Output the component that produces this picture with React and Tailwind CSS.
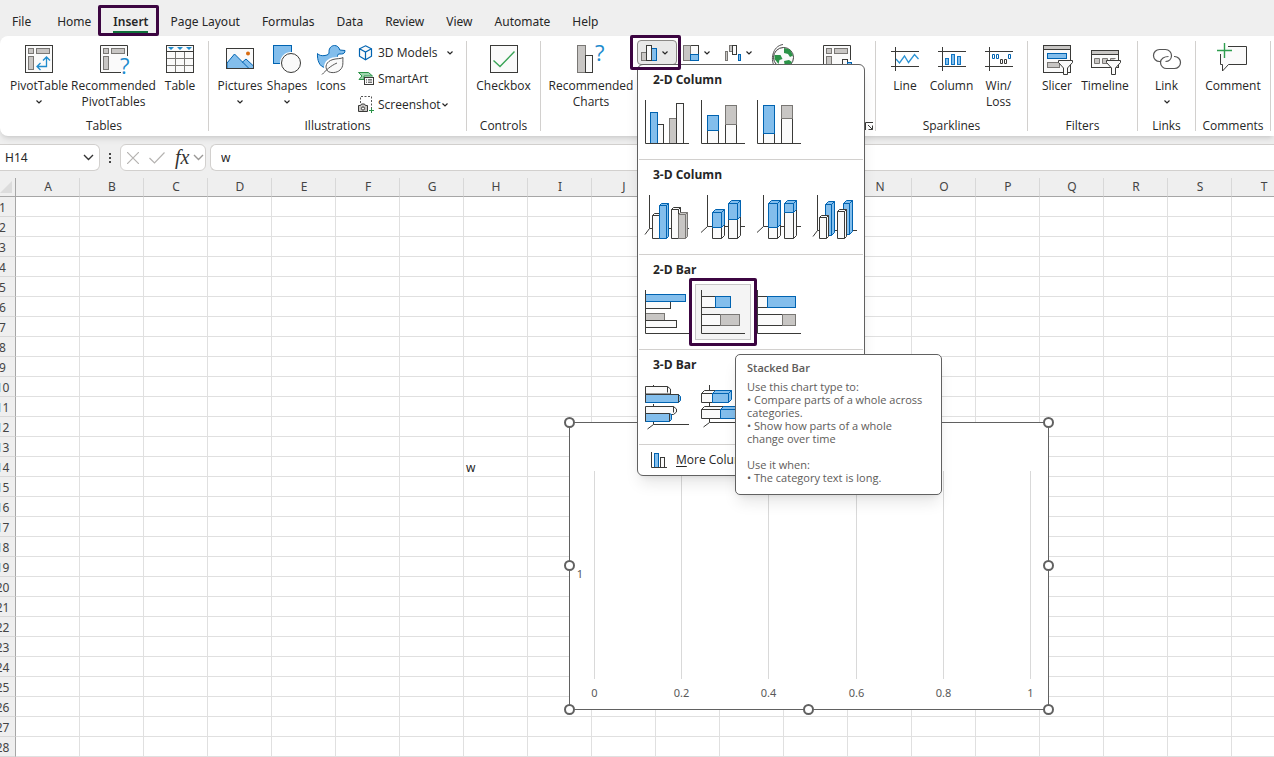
import clsx from "clsx";

const INK = "#3a3a38";
const PAPER = "#fafafa";
const BLUE = "#0063b1";
const SKY = "#83beec";
const GREY = "#797774";
const SILVER = "#c8c6c4";

const tones = {
  white: { fill: PAPER, stroke: INK },
  blue: { fill: SKY, stroke: BLUE },
  grey: { fill: SILVER, stroke: GREY },
};

/* ---------- Drawing helpers ---------- */

function Svg({ w = 28, h = 28, children }) {
  return (
    <svg
      width={w}
      height={h}
      viewBox={`0 0 ${w} ${h}`}
      fill="none"
      stroke={INK}
      className="shrink-0 overflow-visible"
      aria-hidden="true"
    >
      {children}
    </svg>
  );
}

function Bar({ x, y, w, h, tone = "white" }) {
  return <rect x={x} y={y} width={w} height={h} {...tones[tone]} />;
}

// A front face plus a top and a right face pushed back by d
function Block({ x, y, w, h, tone = "white", d = 3 }) {
  const r = x + w;
  return (
    <g {...tones[tone]} strokeLinejoin="round">
      <path d={`M${x} ${y}l${d} ${-d}h${w}l${-d} ${d}z`} />
      <path d={`M${r} ${y}l${d} ${-d}v${h}l${-d} ${d}z`} />
      <rect x={x} y={y} width={w} height={h} />
    </g>
  );
}

function Chevron() {
  return (
    <svg width="8" height="6" viewBox="0 0 8 6" fill="none" className="shrink-0" aria-hidden="true">
      <path d="M1.5 1.5L4 4l2.5-2.5" stroke="#262626" strokeWidth="1.2" />
    </svg>
  );
}

function WideChevron({ color }) {
  return (
    <svg width="11" height="7" viewBox="0 0 11 7" fill="none" className="shrink-0" aria-hidden="true">
      <path d="M1 1l4.500 4.500L10 1" stroke={color} strokeWidth="1.400" />
    </svg>
  );
}

/* ---------- Ribbon icons ---------- */

const PivotCells = () => (
  <>
    <Bar x={3.5} y={3.5} w={5} h={5} tone="grey" />
    <Bar x={11.5} y={3.5} w={13} h={5} tone="grey" />
    <Bar x={3.5} y={11.5} w={5} h={13} tone="grey" />
  </>
);

const QuestionMark = ({ x, y }) => (
  <text x={x} y={y} fontSize="22" fontFamily="Open Sans, sans-serif" fill="#1e8bcd" stroke="none">
    ?
  </text>
);

const PivotTableIcon = () => (
  <Svg>
    <rect x=".5" y=".5" width="27" height="27" fill={PAPER} />
    <PivotCells />
    <path d="M12.500 21.500h9V12M15.500 18l-3.500 3.500 3.500 3.500M18 15.500l3.500-3.500 3.500 3.500" stroke="#1e8bcd" strokeWidth="1.300" />
  </Svg>
);

const RecommendedPivotIcon = () => (
  <Svg>
    <path d="M27.500 11V.5H.5v27H21" fill={PAPER} />
    <PivotCells />
    <QuestionMark x={20} y={29} />
  </Svg>
);

const TableIcon = () => (
  <Svg>
    <rect x=".5" y=".5" width="27" height="27" fill={PAPER} />
    <path d="M9.500 7v20M18.500 7v20M1 13.500h26M1 20.500h26" stroke="#797774" />
    <path d="M.5 6.500h27" />
    <path d="M2 2h6L5 5zM11 2h6l-3 3zM20 2h6l-3 3z" fill="#1e8bcd" stroke="none" />
  </Svg>
);

const PicturesIcon = () => (
  <Svg>
    <rect x=".5" y="3.500" width="27" height="20" fill={PAPER} />
    <path d="M1 18l7.500-9L23 23.500H1zM16 17.500l4-3.500 7.500 7v2.500H22" fill={SKY} stroke={BLUE} />
    <rect x=".5" y="3.500" width="27" height="20" />
    <circle cx="22" cy="8.500" r="2" fill="#d86b10" stroke="none" />
  </Svg>
);

const ShapesIcon = () => (
  <Svg>
    <rect x=".5" y=".5" width="18" height="18" fill={SKY} stroke={BLUE} />
    <circle cx="18" cy="18" r="11" fill="#fff" stroke="none" />
    <circle cx="18" cy="18" r="9.500" fill={PAPER} />
  </Svg>
);

const DuckIcon = () => (
  <Svg>
    <path
      d="M.5 8.500C2 10.500 5 11 8 10.500c3-.5 4.500-1.500 4-4C12 3 14.500.5 17.500.5c2.500 0 4.500 1.500 5.300 4.500L28 5.500c0 2-1 3.500-3.500 3.500h-3c-1.500 1.500-1 3-.5 5.500L12 22.500H8C2.500 22 0 15 .5 8.500z"
      fill={SKY}
      stroke={BLUE}
    />
    <path
      d="M26 12.500c-2 1.500-6 .8-10 2-7 2-8.500 7.500-5.500 11.500 3 2.500 9.500 2 12.500-1 4-3.500 2.500-8 3-12.500z"
      fill="#fff"
      stroke="#fff"
      strokeWidth="4"
    />
    <path d="M26 12.500c-2 1.500-6 .8-10 2-7 2-8.500 7.500-5.500 11.500 3 2.500 9.500 2 12.500-1 4-3.500 2.500-8 3-12.500z" fill={PAPER} stroke="#555" />
    <path d="M5 29.500c4-4 8-8.500 15-11.500" stroke="#555" />
  </Svg>
);

const CubeIcon = () => (
  <Svg w={16} h={16}>
    <path d="M7.500.8l6 3v7.400l-6 3.600-6-3.600V3.800z" fill={PAPER} stroke={BLUE} strokeWidth="1.200" />
    <path d="M1.500 3.800l6 3.200 6-3.200M7.500 7v7.500" stroke={BLUE} strokeWidth="1.200" />
  </Svg>
);

const SmartArtIcon = () => (
  <Svg w={16} h={16}>
    <path d="M.5 1.500h10l4 3.500H6v3.500H1L4 5z" fill="#9fd6ae" stroke="#2b9348" />
    <rect x="6.500" y="6.500" width="9" height="7" fill={PAPER} />
    <path d="M8 8.900h1m1 0h4M8 11.200h1m1 0h4" />
  </Svg>
);

const ScreenshotIcon = () => (
  <Svg w={16} h={16}>
    <path d="M2.500 6V-.5h11V11" stroke="#555" strokeDasharray="2 1.500" />
    <path d="M.5 8.500h2l1-1.500h3l1 1.500h2v6h-9z" fill={SILVER} />
    <circle cx="5" cy="11.500" r="1.600" fill={PAPER} />
    <path d="M13.500 11v5M11 13.500h5" stroke="#2b9348" />
  </Svg>
);

const CheckboxIcon = () => (
  <Svg>
    <rect x=".5" y=".5" width="27" height="27" fill={PAPER} />
    <path d="M3.500 15.500l6.500 6 14.500-15" stroke="#39a356" strokeWidth="1.400" />
  </Svg>
);

const RecommendedChartsIcon = () => (
  <Svg>
    <Bar x={.5} y={.5} w={8} h={27} tone="grey" />
    <Bar x={8.5} y={10.5} w={7} h={17} />
    <QuestionMark x={18} y={16} />
  </Svg>
);

const ColumnChartIcon = () => (
  <Svg w={16} h={16}>
    <Bar x={.5} y={7.5} w={5} h={8} tone="grey" />
    <Bar x={10.5} y={3.5} w={5} h={12} tone="blue" />
    <Bar x={5.5} y={.5} w={5} h={15} />
  </Svg>
);

const HierarchyIcon = () => (
  <Svg w={16} h={16}>
    <Bar x={7.5} y={.5} w={8} h={9} />
    <Bar x={.5} y={.5} w={7} h={15} tone="grey" />
    <Bar x={7.5} y={9.5} w={8} h={6} tone="blue" />
  </Svg>
);

const WaterfallIcon = () => (
  <Svg w={16} h={16}>
    <Bar x={.5} y={6.5} w={2} h={9} tone="grey" />
    <Bar x={4.5} y={.5} w={3} h={6} tone="grey" />
    <Bar x={7.5} y={.5} w={4} h={9} />
    <Bar x={13.5} y={9.5} w={2} h={6} tone="blue" />
  </Svg>
);

const GlobeIcon = () => (
  <Svg>
    <path d="M6 22C1 16 3 1 14-.5" stroke="#555" />
    <circle cx="14.500" cy="12.500" r="10" fill={PAPER} />
    <path d="M15 3l6 1.500 3 6-3 1.500-2-3-4-1zM5.500 10l6 0 2 4-3 1-1 4-4-5zM15 16l5-1 3 2-3 4-4 1z" fill="#2b9348" stroke="none" />
  </Svg>
);

const PivotChartIcon = () => (
  <Svg>
    <path d="M27.500 15V.5H.5v27H17" fill={PAPER} />
    <PivotCells />
    <Bar x={19.5} y={14.5} w={5} h={13} />
    <Bar x={24.5} y={17.5} w={4} h={10} tone="blue" />
  </Svg>
);

const SparkFrame = ({ children }) => (
  <Svg>
    {children}
    <path d="M0 6.500h28M0 21.500h28M4.500 2v24" />
  </Svg>
);

const SparkLineIcon = () => (
  <SparkFrame>
    <path d="M5 14l3.500 4 5-7 4 6.500 6-8 4 4.500" stroke="#2a93d5" strokeWidth="1.300" />
  </SparkFrame>
);

const SparkColumnIcon = () => (
  <SparkFrame>
    <g fill={SKY} stroke="#1076c4">
      <rect x="7.500" y="13.500" width="3" height="6" />
      <rect x="13.500" y="9.500" width="3" height="10" />
      <rect x="19.500" y="11.500" width="3" height="8" />
    </g>
  </SparkFrame>
);

const WinLossIcon = () => (
  <SparkFrame>
    <path d="M7.500 9.500h2v4h-2zM11.500 9.500h2v4h-2zM23.500 9.500h2v4h-2z" stroke={BLUE} />
    <path d="M15.500 14.500h2v4h-2zM19.500 14.500h2v4h-2z" />
  </SparkFrame>
);

const Funnel = () => (
  <path d="M15.500 15.500h14v2l-5 5.500v6.500h-4V23l-5-5.500z" fill={PAPER} />
);

const SlicerIcon = () => (
  <Svg>
    <rect x=".5" y=".5" width="27" height="27" fill={PAPER} />
    <rect x=".5" y=".5" width="27" height="4" fill={SILVER} />
    <Bar x={4.5} y={8.5} w={19} h={5} tone="blue" />
    <Bar x={4.5} y={17.5} w={12} h={5} tone="grey" />
    <Funnel />
  </Svg>
);

const TimelineIcon = () => (
  <Svg>
    <rect x=".5" y="5.500" width="27" height="17" fill={PAPER} />
    <rect x=".5" y="5.500" width="27" height="4" fill={SILVER} />
    <path d="M3.500 13.500h5v5h-5zM11.500 13.500h5v5h-5zM19.500 18v-4.500h5" fill={SILVER} stroke={GREY} />
    <Funnel />
  </Svg>
);

const LinkIcon = () => (
  <Svg>
    <g stroke="#555" strokeWidth="1.200">
      <path d="M8 16.500H6.500a6 6 0 0 1 0-12h6c3.500 0 6 3 6 6 0 3.500-2.500 6-6 6" />
      <path d="M15.500 11.500c-4 0-8 2-8 6 0 3.500 3 6 6 6h8a6 6 0 0 0 0-12H21" />
    </g>
  </Svg>
);

const CommentIcon = () => (
  <Svg>
    <path d="M9 1.500h18.500v18H9.500L3.500 26v-6.500h-2V9" fill={PAPER} />
    <path d="M-2 5.500h15M5.500-2v15" stroke="#2f9e4f" strokeWidth="1.400" />
  </Svg>
);

/* ---------- Chart gallery drawings ---------- */

const FlatAxis = () => <path d="M.5 0v43.500H44" />;
const DeepAxis = ({ x, y }) => <path d={`M${x} 0v${y}H44M${x} ${y}L0 ${y + 6}`} />;
const BarAxis = ({ y }) => <path d={`M8.500 0v${y}H44M8.500 ${y}l-6 4.500`} />;

const Thumb = ({ children }) => (
  <Svg w={44} h={44}>
    {children}
  </Svg>
);

const gallery = [
  {
    title: "2-D Column",
    items: [
      {
        name: "Clustered Column",
        art: (
          <>
            <Bar x={12.5} y={24.5} w={6} h={19} />
            <Bar x={5.5} y={12.5} w={7} h={31} tone="blue" />
            <Bar x={24.5} y={18.5} w={7} h={25} tone="grey" />
            <Bar x={31.5} y={3.5} w={7} h={40} />
            <FlatAxis />
          </>
        ),
      },
      {
        name: "Stacked Column",
        art: (
          <>
            <Bar x={6.5} y={30.5} w={11} h={13} />
            <Bar x={6.5} y={15.5} w={11} h={15} tone="blue" />
            <Bar x={24.5} y={24.5} w={11} h={19} />
            <Bar x={24.5} y={5.5} w={11} h={19} tone="grey" />
            <FlatAxis />
          </>
        ),
      },
      {
        name: "100% Stacked Column",
        art: (
          <>
            <Bar x={6.5} y={33.5} w={11} h={10} />
            <Bar x={6.5} y={5.5} w={11} h={28} tone="blue" />
            <Bar x={24.5} y={18.5} w={11} h={25} />
            <Bar x={24.5} y={5.5} w={11} h={13} tone="grey" />
            <FlatAxis />
          </>
        ),
      },
    ],
  },
  {
    title: "3-D Column",
    items: [
      {
        name: "3-D Clustered Column",
        art: (
          <>
            <DeepAxis x={4.5} y={33.5} />
            <Block x={7.5} y={20.5} w={7} h={23} d={2} />
            <Block x={14.5} y={10.5} w={7} h={33} tone="blue" d={2} />
            <Block x={26.5} y={14.5} w={7} h={29} d={2} />
            <Block x={33.5} y={19.5} w={7} h={24} tone="grey" d={2} />
          </>
        ),
      },
      {
        name: "3-D Stacked Column",
        art: (
          <>
            <DeepAxis x={6.5} y={31.5} />
            <Block x={11.5} y={32.5} w={9} h={11} />
            <Block x={11.5} y={17.5} w={9} h={15} tone="blue" />
            <Block x={27.5} y={24.5} w={9} h={19} />
            <Block x={27.5} y={8.5} w={9} h={16} tone="blue" />
          </>
        ),
      },
      {
        name: "3-D 100% Stacked Column",
        art: (
          <>
            <DeepAxis x={6.5} y={31.5} />
            <Block x={11.5} y={32.5} w={9} h={11} />
            <Block x={11.5} y={8.5} w={9} h={24} tone="blue" />
            <Block x={27.5} y={17.5} w={9} h={26} />
            <Block x={27.5} y={8.5} w={9} h={9} tone="blue" />
          </>
        ),
      },
      {
        name: "3-D Column",
        art: (
          <>
            <DeepAxis x={4.5} y={35.5} />
            <Block x={12.5} y={9.5} w={6} h={31} tone="blue" />
            <Block x={6.5} y={22.5} w={7} h={21} d={2} />
            <Block x={30.5} y={8.5} w={6} h={31} tone="blue" />
            <Block x={24.5} y={16.5} w={7} h={27} d={2} />
          </>
        ),
      },
    ],
  },
  {
    title: "2-D Bar",
    items: [
      {
        name: "Clustered Bar",
        art: (
          <>
            <Bar x={.5} y={11.5} w={25} h={7} />
            <Bar x={.5} y={4.5} w={40} h={7} tone="blue" />
            <Bar x={.5} y={23.5} w={19} h={7} tone="grey" />
            <Bar x={.5} y={30.5} w={31} h={7} />
            <FlatAxis />
          </>
        ),
      },
      {
        name: "Stacked Bar",
        selected: true,
        art: (
          <>
            <Bar x={.5} y={6.5} w={14} h={11} />
            <Bar x={14.5} y={6.5} w={15} h={11} tone="blue" />
            <Bar x={.5} y={24.5} w={19} h={11} />
            <Bar x={19.5} y={24.5} w={19} h={11} tone="grey" />
            <FlatAxis />
          </>
        ),
      },
      {
        name: "100% Stacked Bar",
        art: (
          <>
            <Bar x={.5} y={6.5} w={10} h={11} />
            <Bar x={10.5} y={6.5} w={28} h={11} tone="blue" />
            <Bar x={.5} y={24.5} w={25} h={11} />
            <Bar x={25.5} y={24.5} w={13} h={11} tone="grey" />
            <FlatAxis />
          </>
        ),
      },
    ],
  },
  {
    title: "3-D Bar",
    items: [
      {
        name: "3-D Clustered Bar",
        art: (
          <>
            <path d="M8.500 0v2M8.500 19v2M8.500 37v2.500H44M8.500 39.500l-6 4.500" />
            <path d="M.5 1.500h22l3 2.500v5H.5z" fill={PAPER} />
            <path d="M22.500 1.500v6" />
            <path d="M.5 9.500h33l2 2v4l-2 2H.5z" {...tones.blue} />
            <path d="M.5 17.500v-8h33v8" />
            <path d="M.5 21.500h28l3 2.500v3l-3 2.500H.5z" fill={PAPER} />
            <path d="M28.500 21.500v6" />
            <path d="M.5 28.500h24l2 1v5l-2 2H.5z" {...tones.blue} />
            <path d="M.5 36.500v-8h24v8" />
          </>
        ),
      },
      {
        name: "3-D Stacked Bar",
        art: (
          <>
            <BarAxis y={37.5} />
            <Block x={.5} y={8.5} w={11} h={9} />
            <Block x={11.5} y={8.5} w={16} h={9} tone="blue" />
            <Block x={.5} y={24.5} w={19} h={9} />
            <Block x={19.5} y={24.5} w={20} h={9} tone="blue" />
          </>
        ),
      },
    ],
  },
];

/* ---------- Ribbon ---------- */

const tabs = ["File", "Home", "Insert", "Page Layout", "Formulas", "Data", "Review", "View", "Automate", "Help"];

function TabBar() {
  return (
    <nav className="flex h-9 items-stretch gap-[22px] pl-3 text-[12px]">
      {tabs.map((tab) => (
        <button
          key={tab}
          className={clsx(
            "relative shrink-0 pt-[7px] whitespace-nowrap",
            tab === "File" && "mr-1",
            tab === "Insert" && "font-semibold"
          )}
        >
          {tab}
          {tab === "Insert" && (
            <>
              <span className="absolute inset-x-0 bottom-[3px] h-0.5 bg-[#0f703b]" />
              <span className="absolute top-[5px] -right-[11px] bottom-0 -left-[15px] rounded-xs border-3 border-[#3c0541]" />
            </>
          )}
        </button>
      ))}
    </nav>
  );
}

function Group({ label, className, children }) {
  return (
    <>
      <section aria-label={label} className={clsx("flex shrink-0 flex-col justify-between pb-0.5", className)}>
        <div className="flex">{children}</div>
        <p className="text-center leading-4">{label}</p>
      </section>
      <div className="my-[5px] w-px shrink-0 bg-[#d2d0ce]" />
    </>
  );
}

function Tool({ icon, label, second, menu, className }) {
  return (
    <button className={clsx("flex shrink-0 flex-col items-center pt-[9px] leading-4 whitespace-nowrap", className)}>
      <span className="mb-[5px] flex h-7">{icon}</span>
      <span>{label}</span>
      {second && <span>{second}</span>}
      {menu && (
        <span className="flex h-4 items-center">
          <Chevron />
        </span>
      )}
    </button>
  );
}

function SmallTool({ icon, label, chevronGap }) {
  return (
    <button className="flex h-[26px] items-center whitespace-nowrap">
      {icon}
      <span className="ml-1">{label}</span>
      {chevronGap && (
        <span className={chevronGap}>
          <Chevron />
        </span>
      )}
    </button>
  );
}

function ChartButton({ icon, label, open }) {
  return (
    <button
      aria-label={label}
      className={clsx(
        "flex h-[25px] w-10 items-center gap-1 rounded-sm border pl-[3px]",
        open ? "border-[#8a8886] bg-[#e8e8e8]" : "border-transparent"
      )}
    >
      {icon}
      <Chevron />
    </button>
  );
}

function ScreenTip() {
  return (
    <div
      role="tooltip"
      className="absolute top-[70px] left-10 z-30 w-[207px] rounded-[5px] border border-[#616161] bg-white px-[11px] pt-1.5 pb-2.5 text-left text-[11px] leading-[13px] whitespace-nowrap text-[#5e5c5a] shadow-lg"
    >
      <p className="mb-1.5 font-semibold">Stacked Bar</p>
      <p>Use this chart type to:</p>
      <p>• Compare parts of a whole across</p>
      <p>categories.</p>
      <p>• Show how parts of a whole</p>
      <p>change over time</p>
      <p className="mt-[13px]">Use it when:</p>
      <p>• The category text is long.</p>
    </div>
  );
}

function ChartMenu() {
  return (
    <div className="absolute top-6 left-0 z-20 w-[228px] rounded-md border border-[#616161] bg-white px-px shadow-lg">
      {gallery.map((section) => (
        <section key={section.title} className="border-b border-[#d2d0ce] pb-[9px]">
          <h3 className="h-[29px] pl-3.5 leading-[29px] font-bold">{section.title}</h3>
          <div className="flex">
            {section.items.map((item) => (
              <div key={item.name} className="relative">
                <button
                  aria-label={item.name}
                  className={clsx(
                    "flex size-14 items-center justify-center border",
                    item.selected ? "border-[#c6c6c6] bg-[#f4f4f4]" : "border-transparent"
                  )}
                >
                  <Thumb>{item.art}</Thumb>
                </button>
                {item.selected && (
                  <>
                    <span className="pointer-events-none absolute -inset-1.5 z-10 rounded-xs border-3 border-[#3c0541]" />
                    <ScreenTip />
                  </>
                )}
              </div>
            ))}
          </div>
        </section>
      ))}
      <button className="flex h-[30px] items-center gap-[9px] pl-3 whitespace-nowrap">
        <Svg w={16} h={16}>
          <Bar x={3.5} y={1.5} w={4} h={14} tone="blue" />
          <Bar x={9.5} y={5.5} w={4} h={10} />
          <path d="M.5 0v15.500H16" />
        </Svg>
        <span>
          <u className="underline-offset-2">M</u>ore Column Charts...
        </span>
      </button>
    </div>
  );
}

function Ribbon() {
  return (
    <div className="relative z-20 flex h-[100px] rounded-l-lg bg-white font-['Open_Sans',sans-serif] text-[12px] shadow-md">
      <Group label="Tables" className="w-[208px]">
        <Tool icon={<PivotTableIcon />} label="PivotTable" menu className="ml-2 w-[62px]" />
        <Tool icon={<RecommendedPivotIcon />} label="Recommended" second="PivotTables" className="w-[87px]" />
        <Tool icon={<TableIcon />} label="Table" className="w-[46px]" />
      </Group>

      <Group label="Illustrations" className="w-[257px]">
        <Tool icon={<PicturesIcon />} label="Pictures" menu className="ml-[5px] w-[52px]" />
        <Tool icon={<ShapesIcon />} label="Shapes" menu className="w-[42px]" />
        <Tool icon={<DuckIcon />} label="Icons" className="w-[46px]" />
        <div className="ml-1 flex flex-col pt-1">
          <SmallTool icon={<CubeIcon />} label="3D Models" chevronGap="ml-2" />
          <SmallTool icon={<SmartArtIcon />} label="SmartArt" />
          <SmallTool icon={<ScreenshotIcon />} label="Screenshot" chevronGap="ml-0" />
        </div>
      </Group>

      <Group label="Controls" className="w-[73px]">
        <Tool icon={<CheckboxIcon />} label="Checkbox" className="w-[73px]" />
      </Group>

      <Group label="Charts" className="relative w-[334px]">
        <Tool icon={<RecommendedChartsIcon />} label="Recommended" second="Charts" className="ml-1.5 w-[88px]" />
        <div className="ml-0.5 flex gap-0.5 self-start pt-1">
          <div className="relative">
            <ChartButton icon={<ColumnChartIcon />} label="Insert Column or Bar Chart" open />
            <ChartMenu />
            <span className="pointer-events-none absolute -top-[5px] -left-[7px] z-30 h-[35px] w-[51px] rounded-xs border-3 border-[#3c0541]" />
          </div>
          <ChartButton icon={<HierarchyIcon />} label="Insert Hierarchy Chart" />
          <ChartButton icon={<WaterfallIcon />} label="Insert Waterfall Chart" />
        </div>
        <Tool icon={<GlobeIcon />} label="Maps" className="w-11" />
        <Tool icon={<PivotChartIcon />} className="w-16" />
        <button aria-label="Chart settings" className="absolute right-0.5 bottom-1.5">
          <Svg w={8} h={8}>
            <path d="M.5 8V.5H8M3 3l4.500 4.500M7.500 3.500v4h-4" />
          </Svg>
        </button>
      </Group>

      <Group label="Sparklines" className="w-[151px]">
        <Tool icon={<SparkLineIcon />} label="Line" className="ml-1.5 w-[46px]" />
        <Tool icon={<SparkColumnIcon />} label="Column" className="w-[47px]" />
        <Tool icon={<WinLossIcon />} label="Win/" second="Loss" className="w-[47px]" />
      </Group>

      <Group label="Filters" className="w-[109px]">
        <Tool icon={<SlicerIcon />} label="Slicer" className="ml-2 w-[42px]" />
        <Tool icon={<TimelineIcon />} label="Timeline" className="w-[54px]" />
      </Group>

      <Group label="Links" className="w-[57px]">
        <Tool icon={<LinkIcon />} label="Link" menu className="w-[57px]" />
      </Group>

      <Group label="Comments" className="w-[74px]">
        <Tool icon={<CommentIcon />} label="Comment" className="w-[74px]" />
      </Group>
    </div>
  );
}

/* ---------- Formula bar ---------- */

function FormulaBar() {
  return (
    <div className="flex h-[27px] items-stretch text-[12px]">
      <div className="flex w-[100px] shrink-0 items-center rounded-r-md border border-l-0 border-[#d2d0ce] bg-white px-[5px]">
        <input aria-label="Name Box" defaultValue="H14" className="w-0 flex-1 bg-transparent outline-none" />
        <WideChevron color="#333" />
      </div>
      <div className="flex w-5 shrink-0 items-center justify-center">
        <svg width="2" height="12" viewBox="0 0 2 12" fill="#444" aria-hidden="true">
          <path d="M0 1h2v2H0zM0 5h2v2H0zM0 9h2v2H0z" />
        </svg>
      </div>
      <div className="flex w-[86px] shrink-0 items-center rounded-md border border-[#d2d0ce] bg-white pl-1.5">
        <button aria-label="Cancel">
          <svg width="12" height="12" viewBox="0 0 12 12" stroke="#b5b3b1" strokeWidth="1.200" aria-hidden="true">
            <path d="M0 0l12 12M12 0L0 12" />
          </svg>
        </button>
        <button aria-label="Enter" className="ml-2.5">
          <svg width="16" height="12" viewBox="0 0 16 12" fill="none" stroke="#b5b3b1" strokeWidth="1.200" aria-hidden="true">
            <path d="M.5 6l5 5L15.500.5" />
          </svg>
        </button>
        <button className="ml-2.5 pb-0.5 font-['Liberation_Serif',serif] text-[20px] leading-5 text-[#333] italic">
          fx
        </button>
        <span className="ml-1">
          <WideChevron color="#9a9896" />
        </span>
      </div>
      <input
        aria-label="Formula"
        defaultValue="w"
        className="ml-1 min-w-0 flex-1 rounded-l-md border border-r-0 border-[#d2d0ce] bg-white pl-2.5 outline-none"
      />
    </div>
  );
}

/* ---------- Sheet ---------- */

const columns = "ABCDEFGHIJKLMNOPQRST".split("");
const rows = Array.from({ length: 28 }, (_, i) => i + 1);
const cells = { H14: "w" };

function Grid() {
  return (
    <table className="-ml-2.5 w-[1306px] table-fixed border-separate border-spacing-0 text-[12px]">
      <thead>
        <tr className="h-[19px] text-[#444]">
          <th className="w-[26px] border-r border-b border-r-[#a6a6a6] border-b-[#a6a6a6] p-0">
            <svg width="12" height="12" viewBox="0 0 12 12" className="mr-[3px] ml-auto" aria-hidden="true">
              <path d="M12 0v12H0z" fill="#dcdcdc" />
            </svg>
          </th>
          {columns.map((c) => (
            <th
              key={c}
              scope="col"
              className="w-16 border-r border-b border-r-[#d8d8d8] border-b-[#a6a6a6] p-0 pl-px leading-[18px] font-normal"
            >
              {c}
            </th>
          ))}
        </tr>
      </thead>
      <tbody>
        {rows.map((r) => (
          <tr key={r} className="h-5">
            <th
              scope="row"
              className="border-r border-b border-r-[#a6a6a6] border-b-[#d8d8d8] p-0 pt-[3px] leading-4 font-normal text-[#444]"
            >
              {r}
            </th>
            {columns.map((c) => (
              <td key={c} className="border-r border-b border-[#e0e0e0] bg-white p-0 pt-[3px] pl-0.5 leading-4">
                {cells[c + r]}
              </td>
            ))}
          </tr>
        ))}
      </tbody>
    </table>
  );
}

const ticks = ["0", "0.2", "0.4", "0.6", "0.8", "1"];
const handles = [
  [0, 0],
  [479, 0],
  [0, 143],
  [479, 143],
  [0, 287],
  [239, 287],
  [479, 287],
];

// The empty chart that floats over the cells, with its selection handles
function ChartObject() {
  return (
    <div className="absolute top-[244px] left-[569px]">
      <svg width="480" height="288" viewBox="0 0 480 288" className="block overflow-visible" role="img" aria-label="Chart">
        <rect x=".5" y=".5" width="479" height="287" fill="#fff" stroke="#616161" />
        <g fontSize="11" fill="#595959" textAnchor="middle">
          {ticks.map((t, i) => {
            const x = 25 + Math.floor(i * 87.35);
            return (
              <g key={t}>
                <path d={`M${x + 0.5} 49v208`} stroke="#d9d9d9" />
                <text x={x + 0.5} y="275">
                  {t}
                </text>
              </g>
            );
          })}
          <text x="11" y="156">
            1
          </text>
        </g>
        {handles.map(([x, y]) => (
          <circle key={`${x}-${y}`} cx={x + 0.5} cy={y + 0.5} r="4.500" fill="#fff" stroke="#616161" strokeWidth="2" />
        ))}
      </svg>
    </div>
  );
}

export default function App() {
  return (
    <div className="flex h-screen flex-col overflow-hidden bg-[#efefef] font-['Noto_Sans',sans-serif] text-[#262626]">
      <TabBar />
      <Ribbon />
      <div className="pt-2">
        <FormulaBar />
      </div>
      <main className="relative mt-[7px] flex-1">
        <Grid />
        <ChartObject />
      </main>
    </div>
  );
}
